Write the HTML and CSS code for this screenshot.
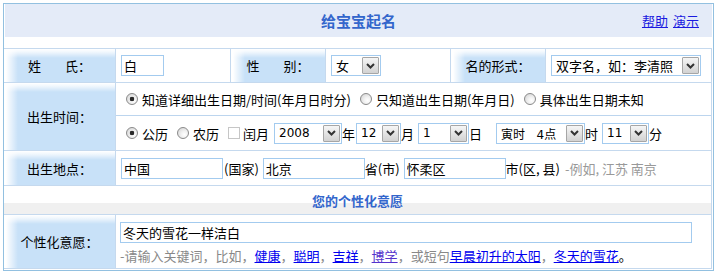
FILE: index.html
```html
<!DOCTYPE html>
<html lang="zh-CN">
<head>
<meta charset="utf-8">
<title>给宝宝起名</title>
<link rel="stylesheet" href="styles.css">
</head>
<body>
<div class="wrap">
  <div class="head">
    <span></span>
    <span class="title">给宝宝起名</span>
    <span class="links"><a href="#">帮助</a><a href="#">演示</a></span>
  </div>
  <div class="form">
    <div class="row r1">
      <div class="lab">姓<span class="sp"></span>氏：</div>
      <div class="cell"><input class="txt w42" value="白"></div>
      <div class="lab">性<span class="sp"></span>别：</div>
      <div class="cell"><span class="sel w50 ml5"><span class="val">女</span><span class="btn"><svg width="9" height="6" viewBox="0 0 9 6"><polyline points="1,1 4.5,4.5 8,1" fill="none" stroke="#333" stroke-width="2"/></svg></span></span></div>
      <div class="lab">名的形式：</div>
      <div class="cell"><span class="sel w150 ml5"><span class="val">双字名，如：李清照</span><span class="btn"><svg width="9" height="6" viewBox="0 0 9 6"><polyline points="1,1 4.5,4.5 8,1" fill="none" stroke="#333" stroke-width="2"/></svg></span></span></div>
    </div>
    <div class="row r2">
      <div class="lab">出生时间：</div>
      <div class="cell col">
        <div class="sub s1">
          <input type="radio" name="m" class="rd first" checked><span>知道详细出生日期/时间(年月日时分)</span>
          <input type="radio" name="m" class="rd"><span>只知道出生日期(年月日)</span>
          <input type="radio" name="m" class="rd"><span>具体出生日期未知</span>
        </div>
        <div class="sub s2">
          <input type="radio" name="c" class="rd first" checked><span>公历</span>
          <input type="radio" name="c" class="rd"><span>农历</span>
          <input type="checkbox" class="cb"><span>闰月</span>
          <span class="sel w68 ml5"><span class="val">2008</span><span class="btn"><svg width="9" height="6" viewBox="0 0 9 6"><polyline points="1,1 4.5,4.5 8,1" fill="none" stroke="#333" stroke-width="2"/></svg></span></span><span>年</span>
          <span class="sel w45 ml1"><span class="val">12</span><span class="btn"><svg width="9" height="6" viewBox="0 0 9 6"><polyline points="1,1 4.5,4.5 8,1" fill="none" stroke="#333" stroke-width="2"/></svg></span></span><span>月</span>
          <span class="sel w51 ml4"><span class="val">1</span><span class="btn"><svg width="9" height="6" viewBox="0 0 9 6"><polyline points="1,1 4.5,4.5 8,1" fill="none" stroke="#333" stroke-width="2"/></svg></span></span><span>日</span>
          <span class="sel w89 ml14"><span class="val">寅时   4点</span><span class="btn"><svg width="9" height="6" viewBox="0 0 9 6"><polyline points="1,1 4.5,4.5 8,1" fill="none" stroke="#333" stroke-width="2"/></svg></span></span><span>时</span>
          <span class="sel w47 ml4"><span class="val">11</span><span class="btn"><svg width="9" height="6" viewBox="0 0 9 6"><polyline points="1,1 4.5,4.5 8,1" fill="none" stroke="#333" stroke-width="2"/></svg></span></span><span>分</span>
        </div>
      </div>
    </div>
    <div class="row r3">
      <div class="lab">出生地点：</div>
      <div class="cell">
        <input class="txt w102 ml5" value="中国"><span class="ml1">(国家)</span>
        <input class="txt w102 ml4" value="北京"><span>省(市)</span>
        <input class="txt w102 ml4" value="怀柔区"><span>市(区, 县)</span>
        <span class="gray ml5">-例如, 江苏 南京</span>
      </div>
    </div>
    <div class="row r4">
      <div class="subtitle">您的个性化意愿</div>
    </div>
    <div class="row r5">
      <div class="lab">个性化意愿：</div>
      <div class="cell col wish">
        <input class="txt w572" value="冬天的雪花一样洁白">
        <div class="hint">-请输入关键词，比如，<a href="#">健康</a>，<a href="#">聪明</a>，<a href="#">吉祥</a>，<a href="#" class="visited">博学</a>，或短句<a href="#">早晨初升的太阳</a>，<a href="#">冬天的雪花</a><span class="dot">。</span></div>
      </div>
    </div>
  </div>
</div>
</body>
</html>
```
FILE: styles.css
```css
html, body { margin: 0; padding: 0; background: #fff; }
body {
  font-family: "Noto Sans CJK SC", "Liberation Sans", sans-serif;
  font-size: 13px;
  color: #000;
  text-spacing-trim: space-all;
}
.wrap {
  margin: 3px 0 0 3px;
  width: 709px;
  border: 1px solid #92c0e0;
  padding-bottom: 1px;
}
.head {
  margin: 0 1px;
  height: 33px;
  background: #e4ebf8;
  display: grid;
  grid-template-columns: 1fr auto 1fr;
  align-items: center;
}
.title {
  color: #3366cc;
  font-weight: bold;
  font-size: 15px;
}
.links {
  justify-self: end;
  padding-right: 13px;
  display: flex;
  gap: 5px;
}
.links a { color: #1a1ae0; text-decoration: underline; }
.form {
  margin-top: 11px;
  margin-right: 1px;
  border-top: 1px solid #c5d9ee;
  border-right: 1px solid #c5d9ee;
}
.row {
  display: grid;
  gap: 1px;
  background: #c5d9ee;
  border-bottom: 1px solid #c5d9ee;
}
.row > div { background: #fff; }
.r1 { grid-template-columns: 111px 114px 94px 124px 94px 165px; height: 33px; }
.r2 { grid-template-columns: 111px 1fr; height: 67px; }
.r3 { grid-template-columns: 111px 1fr; height: 34px; }
.r4 { grid-template-columns: 1fr; height: 28px; }
.r5 { grid-template-columns: 111px 1fr; height: 53px; }

.row > .lab {
  display: flex;
  align-items: center;
  justify-content: center;
  white-space: nowrap;
  background:
    linear-gradient(to bottom, #fff 0, rgba(255,255,255,0.75) 3px, rgba(255,255,255,0) 9px),
    linear-gradient(to right, #fff 0, #fff 2px, rgba(255,255,255,0.75) 5px, rgba(255,255,255,0) 14px),
    #c8e1f8;
}
.sp { display: inline-block; width: 24px; }
.cell {
  display: flex;
  align-items: center;
  white-space: nowrap;
}
.cell.col {
  flex-direction: column;
  align-items: stretch;
}
.sub {
  display: flex;
  align-items: center;
  white-space: nowrap;
}
.s1 { height: 32px; border-bottom: 1px solid #bcd5ee; }
.s2 { height: 34px; }

.txt {
  box-sizing: border-box;
  height: 21px;
  border: 1px solid #a3cbef;
  padding: 0 2px;
  font: inherit;
  font-size: 13px;
  color: #000;
  outline: none;
  background: #fff;
}
.r1 .txt { margin-left: 5px; }
.w42 { width: 43px; }
.w102 { width: 102px; }
.w572 { width: 572px; }
.ml1 { margin-left: 1px; }
.ml4 { margin-left: 4px; }
.ml5 { margin-left: 5px; }
.ml14 { margin-left: 14px; }

.sel {
  box-sizing: border-box;
  display: inline-flex;
  align-items: center;
  height: 21px;
  border: 1px solid #a3cbef;
  background: #fff;
  font-family: "DejaVu Sans", "Noto Sans CJK SC", sans-serif;
  font-size: 12px;
}
.r1 .sel { font-family: "Noto Sans CJK SC", sans-serif; font-size: 13px; }
.sel .val { flex: 1; padding-left: 4px; white-space: pre; }
.sel .btn {
  box-sizing: border-box;
  width: 17px;
  height: 17px;
  margin-right: 1px;
  border: 1px solid #a6a6a6;
  border-radius: 1px;
  background: linear-gradient(#f6f6f6, #d2d2d2);
  display: flex;
  align-items: center;
  justify-content: center;
}
.w45 { width: 45px; }
.w47 { width: 47px; }
.w50 { width: 50px; }
.w51 { width: 51px; }
.w68 { width: 68px; }
.w89 { width: 89px; }
.w150 { width: 150px; }

.rd {
  appearance: none;
  -webkit-appearance: none;
  box-sizing: border-box;
  width: 12px;
  height: 12px;
  margin: 0 4px 0 9px;
  border: 1px solid #8a8a8a;
  border-radius: 50%;
  background: radial-gradient(circle at 65% 65%, #ffffff 0, #f2f2f2 35%, #cfcfcf 100%);
}
.rd.first { margin-left: 10px; }
.rd:checked {
  background:
    radial-gradient(circle, #2a2a2a 0, #2a2a2a 2px, rgba(0,0,0,0) 2.6px),
    radial-gradient(circle at 65% 65%, #ffffff 0, #f2f2f2 35%, #cfcfcf 100%);
}
.cb {
  appearance: none;
  -webkit-appearance: none;
  box-sizing: border-box;
  width: 12px;
  height: 12px;
  margin: 0 3px 0 9px;
  border: 1px solid #c6c6c6;
  background: #fff;
}
.gray { color: #999; }

.row > .subtitle {
  display: flex;
  align-items: center;
  justify-content: center;
  color: #3366cc;
  font-weight: bold;
  font-size: 13px;
  background: linear-gradient(to bottom, #fff 0, #fff 17px, #f0f0f0 17px, #f0f0f0 100%);
}
.wish { padding-left: 4px; padding-top: 7px; }
.wish .txt { align-self: flex-start; }
.hint {
  margin-top: 3px;
  color: #888;
  white-space: nowrap;
}
.hint a { color: #0000ee; text-decoration: underline; }
.hint a.visited { color: #5533cc; }
.hint .dot { color: #000; }
```
